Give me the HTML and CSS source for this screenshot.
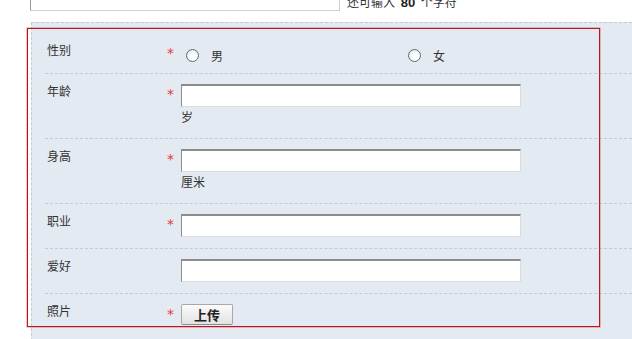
FILE: index.html
```html
<!DOCTYPE html>
<html lang="zh-CN">
<head>
    <meta charset="UTF-8">
    <title>个人资料</title>
    <link rel="stylesheet" href="styles.css">
</head>
<body>
    <!-- Intro text box (scrolled partly out of view) -->
    <div class="intro">
        <textarea class="intro-box"></textarea>
        <span class="counter">还可输入 <b>80</b> 个字符</span>
    </div>

    <!-- Profile form -->
    <div class="profile-form">
        <div class="highlight"></div>

        <div class="row">
            <div class="label">性别</div>
            <div class="star">*</div>
            <div class="field options">
                <label class="option"><input type="radio" name="sex"><span>男</span></label>
                <label class="option"><input type="radio" name="sex"><span>女</span></label>
            </div>
        </div>

        <div class="row">
            <div class="label">年龄</div>
            <div class="star">*</div>
            <div class="field">
                <input type="text" class="text-input">
                <div class="unit">岁</div>
            </div>
        </div>

        <div class="row">
            <div class="label">身高</div>
            <div class="star">*</div>
            <div class="field">
                <input type="text" class="text-input">
                <div class="unit">厘米</div>
            </div>
        </div>

        <div class="row">
            <div class="label">职业</div>
            <div class="star">*</div>
            <div class="field">
                <input type="text" class="text-input">
            </div>
        </div>

        <div class="row">
            <div class="label">爱好</div>
            <div class="star"></div>
            <div class="field">
                <input type="text" class="text-input">
            </div>
        </div>

        <div class="row last">
            <div class="label">照片</div>
            <div class="star">*</div>
            <div class="field">
                <button class="upload-btn">上传</button>
            </div>
        </div>
    </div>
</body>
</html>
```

FILE: styles.css
```css
* {
    box-sizing: border-box;
}

body {
    margin: 0;
    background: #fff;
    color: #333;
    font-family: "Noto Sans CJK SC", "Liberation Sans", sans-serif;
    font-size: 12px;
}

/* Intro box, scrolled off the top */
.intro {
    display: flex;
    align-items: flex-end;
    padding-left: 30px;
    margin-top: -30px;
}

.intro-box {
    width: 310px;
    height: 41px;
    border: 1px solid #cfcfcf;
    border-left-color: #9a9a9a;
    resize: none;
    display: block;
}

.counter {
    margin-left: 7px;
    margin-bottom: 1px;
    line-height: 14px;
    color: #333;
}

.counter b {
    margin: 0 3px;
    font-family: "Liberation Sans", sans-serif;
    font-size: 13px;
    color: #222;
}

/* Form panel */
.profile-form {
    position: relative;
    margin: 11px 0 0 31px;
    padding: 10px 0 20px;
    background: #e4eaf1;
    border-top: 1px dashed #c3cad2;
    border-left: 1px dashed #c3cad2;
}

.highlight {
    position: absolute;
    left: -5px;
    top: 5px;
    width: 573px;
    height: 299px;
    border: 1px solid #c0141c;
    box-shadow: 0 0 0 0.5px rgba(192, 20, 28, 0.5);
    pointer-events: none;
}

.row {
    display: grid;
    grid-template-columns: 121px 15px 1fr;
    margin-left: 13px;
    padding: 10px 0 11px;
    border-bottom: 1px dashed #c3cad2;
}

.row.last {
    border-bottom: none;
}

.label {
    padding-left: 2px;
    line-height: 14px;
    color: #333;
}

.star {
    padding: 4px 0 0 1px;
    line-height: 12px;
    color: #e4393c;
    font-family: "DejaVu Sans", sans-serif;
    font-size: 14px;
}

.options {
    display: grid;
    grid-template-columns: 222px 222px;
    padding-top: 6px;
}

.option {
    display: flex;
    align-items: center;
    height: 13px;
    line-height: 13px;
}

.option input {
    appearance: none;
    -webkit-appearance: none;
    width: 13px;
    height: 13px;
    margin: 0 12px 0 5px;
    border: 1px solid #5b6d7e;
    border-radius: 50%;
    background: radial-gradient(circle at 60% 65%, #ffffff 30%, #d6dee6 100%);
}

.text-input {
    display: block;
    width: 340px;
    height: 23px;
    margin: 0;
    border: 1px solid #dcdcdc;
    border-top: 2px solid #8c8c8c;
    border-left-color: #8c8c8c;
    background: #fff;
    outline: none;
}

.unit {
    line-height: 20px;
    color: #333;
}

.upload-btn {
    display: block;
    width: 52px;
    height: 21px;
    padding: 0;
    border: 1px solid #a8a8a8;
    border-bottom-color: #8e8e8e;
    border-radius: 2px;
    background: linear-gradient(#fbfbfb, #e2e2e2);
    color: #222;
    font-family: "Noto Sans CJK SC", sans-serif;
    font-size: 13px;
    font-weight: bold;
    line-height: 19px;
    cursor: pointer;
}
```
